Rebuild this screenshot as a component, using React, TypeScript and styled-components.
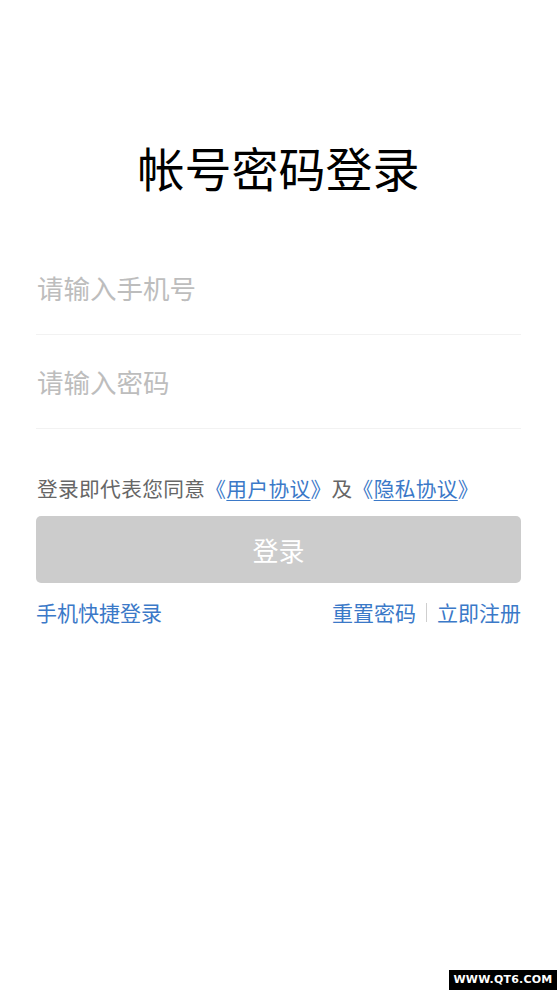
import styled, { createGlobalStyle } from "styled-components";

const GlobalStyle = createGlobalStyle`
  html, body {
    margin: 0;
    padding: 0;
    background: #ffffff;
  }
  body {
    font-family: "Noto Sans CJK SC", "Noto Sans", sans-serif;
  }
`;

const Page = styled.div`
  position: relative;
  width: 558px;
  height: 992px;
  background: #ffffff;
  box-sizing: border-box;
  padding: 0 37px 0 36px;
  overflow: hidden;
`;

const Title = styled.h1`
  margin: 0;
  padding-top: 136px;
  height: 62px;
  line-height: 62px;
  text-align: center;
  font-size: 47px;
  font-weight: 400;
  color: #000000;
`;

const Form = styled.div`
  margin-top: 43px;
  display: flex;
  flex-direction: column;
`;

const Field = styled.div`
  height: 93px;
  display: flex;
  align-items: center;
  border-bottom: 1px solid #f2f2f2;
`;

const Input = styled.input`
  flex: 1;
  border: none;
  outline: none;
  padding: 0;
  margin: 0 0 0 1px;
  background: transparent;
  font-family: "Noto Sans CJK SC", sans-serif;
  font-size: 26.5px;
  color: #333;

  &::placeholder {
    color: #bdbdbd;
  }
`;

const Agreement = styled.p`
  margin: 41px 0 0 1px;
  font-size: 20.7px;
  letter-spacing: 0.35px;
  line-height: 36px;
  color: #666666;
  white-space: nowrap;
`;

const Link = styled.a`
  color: #3b79c8;
  text-decoration: none;
`;

const Underlined = styled.span`
  text-decoration: underline;
  text-underline-offset: 3px;
  text-decoration-thickness: 1px;
`;

const LoginButton = styled.button`
  display: block;
  width: 100%;
  height: 67px;
  margin-top: 10px;
  border: none;
  border-radius: 5px;
  background: #cccccc;
  color: #ffffff;
  font-family: "Noto Sans CJK SC", sans-serif;
  font-size: 26px;
  cursor: default;
`;

const Footer = styled.div`
  margin-top: 13px;
  display: flex;
  justify-content: space-between;
  align-items: center;
  font-size: 21px;
  line-height: 32px;
`;

const FooterRight = styled.div`
  display: flex;
  align-items: center;
`;

const Separator = styled.span`
  width: 1px;
  height: 19px;
  margin: 0 10px;
  background: #cfcfcf;
`;

const Watermark = styled.div`
  position: absolute;
  right: 1px;
  bottom: 2px;
  width: 108px;
  height: 20px;
  background: #000000;
  color: #ffffff;
  font-family: "DejaVu Sans", sans-serif;
  font-weight: 700;
  font-size: 11px;
  line-height: 20px;
  text-align: center;
  letter-spacing: 0.2px;
`;

export default function App() {
  return (
    <>
      <GlobalStyle />
      <Page>
        <Title>帐号密码登录</Title>
        <Form>
          <Field>
            <Input placeholder="请输入手机号" />
          </Field>
          <Field>
            <Input type="password" placeholder="请输入密码" />
          </Field>
        </Form>
        <Agreement>
          登录即代表您同意
          <Link>
            《<Underlined>用户协议</Underlined>》
          </Link>
          及
          <Link>
            《<Underlined>隐私协议</Underlined>》
          </Link>
        </Agreement>
        <LoginButton>登录</LoginButton>
        <Footer>
          <Link>手机快捷登录</Link>
          <FooterRight>
            <Link>重置密码</Link>
            <Separator />
            <Link>立即注册</Link>
          </FooterRight>
        </Footer>
        <Watermark>WWW.QT6.COM</Watermark>
      </Page>
    </>
  );
}
